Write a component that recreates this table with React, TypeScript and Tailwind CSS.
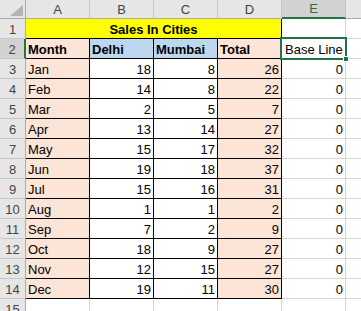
import React from "react";

const data: [string, number, number, number][] = [
  ["Jan", 18, 8, 26],
  ["Feb", 14, 8, 22],
  ["Mar", 2, 5, 7],
  ["Apr", 13, 14, 27],
  ["May", 15, 17, 32],
  ["Jun", 19, 18, 37],
  ["Jul", 15, 16, 31],
  ["Aug", 1, 1, 2],
  ["Sep", 7, 2, 9],
  ["Oct", 18, 9, 27],
  ["Nov", 12, 15, 27],
  ["Dec", 19, 11, 30],
];

function RowHead({ n, selected }: { n: number; selected?: boolean }) {
  return (
    <div
      className={
        "box-border h-[20px] w-[26px] shrink-0 border-b border-b-[#C6C6C6] flex items-end justify-center pb-[1px] leading-[15px] text-[#444444] " +
        (selected
          ? "bg-[#D2D2D2] border-r-2 border-r-[#217346]"
          : "bg-[#E6E6E6] border-r border-r-[#ABABAB]")
      }
    >
      {n}
    </div>
  );
}

export default function App() {
  const cols = ["A", "B", "C", "D", "E"];
  return (
    <div className="relative w-[361px] h-[311px] overflow-hidden bg-white font-['Liberation_Sans',Arial,sans-serif] text-[13px] text-black">
      {/* column header row */}
      <div className="flex h-[19px]">
        <div className="relative box-border w-[26px] h-[19px] shrink-0 bg-[#E6E6E6] border-r border-b border-[#ABABAB]">
          <svg className="absolute left-[10px] top-[5px]" width="13" height="11" viewBox="0 0 13 11">
            <polygon points="13,0 13,11 0,11" fill="#B4B4B4" />
          </svg>
        </div>
        {cols.map((c) => (
          <div
            key={c}
            className={
              "box-border w-[64px] h-[19px] shrink-0 border-r border-r-[#C6C6C6] flex items-center justify-center leading-[15px] " +
              (c === "E"
                ? "bg-[#D2D2D2] text-[#217346] border-b-2 border-b-[#217346]"
                : "bg-[#E6E6E6] text-[#444444] border-b border-b-[#ABABAB]")
            }
          >
            {c}
          </div>
        ))}
        <div className="box-border flex-1 h-[19px] bg-[#E6E6E6] border-b border-b-[#ABABAB]" />
      </div>

      {/* row 1 */}
      <div className="flex">
        <RowHead n={1} />
        <div className="box-border w-[256px] h-[20px] shrink-0 bg-[#FFFF00] border-r border-b border-black flex items-end justify-center pb-[1px] leading-[15px] font-bold">
          Sales In Cities
        </div>
        <div className="box-border w-[64px] h-[20px] shrink-0 border-r border-b border-[#D4D4D4]" />
        <div className="box-border flex-1 h-[20px] border-b border-[#D4D4D4]" />
      </div>

      {/* row 2 */}
      <div className="flex">
        <RowHead n={2} selected />
        <div className="box-border w-[64px] h-[20px] shrink-0 bg-[#FCE4D6] border-r border-b border-black flex items-end px-[2px] pb-[1px] leading-[15px] font-bold">
          Month
        </div>
        <div className="box-border w-[64px] h-[20px] shrink-0 bg-[#BDD7EE] border-r border-b border-black flex items-end px-[2px] pb-[1px] leading-[15px] font-bold">
          Delhi
        </div>
        <div className="box-border w-[64px] h-[20px] shrink-0 bg-[#BDD7EE] border-r border-b border-black flex items-end px-[2px] pb-[1px] leading-[15px] font-bold">
          Mumbai
        </div>
        <div className="box-border w-[64px] h-[20px] shrink-0 bg-[#FCE4D6] border-r border-b border-black flex items-end px-[2px] pb-[1px] leading-[15px] font-bold">
          Total
        </div>
        <div className="box-border w-[64px] h-[20px] shrink-0 border-r border-b border-[#D4D4D4] flex items-end px-[3px] pb-[1px] leading-[15px] whitespace-nowrap">
          Base Line
        </div>
        <div className="box-border flex-1 h-[20px] border-b border-[#D4D4D4]" />
      </div>

      {data.map(([m, d, mu, t], i) => (
        <div className="flex" key={m}>
          <RowHead n={i + 3} />
          <div className="box-border w-[64px] h-[20px] shrink-0 bg-[#FCE4D6] border-r border-b border-black flex items-end px-[2px] pb-[1px] leading-[15px]">
            {m}
          </div>
          <div className="box-border w-[64px] h-[20px] shrink-0 bg-white border-r border-b border-black flex items-end justify-end px-[2px] pb-[1px] leading-[15px]">
            {d}
          </div>
          <div className="box-border w-[64px] h-[20px] shrink-0 bg-white border-r border-b border-black flex items-end justify-end px-[2px] pb-[1px] leading-[15px]">
            {mu}
          </div>
          <div className="box-border w-[64px] h-[20px] shrink-0 bg-[#FCE4D6] border-r border-b border-black flex items-end justify-end px-[2px] pb-[1px] leading-[15px]">
            {t}
          </div>
          <div className="box-border w-[64px] h-[20px] shrink-0 border-r border-b border-[#D4D4D4] flex items-end justify-end px-[2px] pb-[1px] leading-[15px]">
            0
          </div>
          <div className="box-border flex-1 h-[20px] border-b border-[#D4D4D4]" />
        </div>
      ))}

      {/* row 15 */}
      <div className="flex">
        <RowHead n={15} />
        {[0, 1, 2, 3, 4].map((k) => (
          <div key={k} className="box-border w-[64px] h-[20px] shrink-0 border-r border-b border-[#D4D4D4]" />
        ))}
        <div className="box-border flex-1 h-[20px] border-b border-[#D4D4D4]" />
      </div>

      {/* selection box around E2 */}
      <div className="absolute left-[280px] top-[37px] w-[67px] h-[23px] box-border border-2 border-[#217346] pointer-events-none" />
      <div className="absolute left-[343px] top-[56px] w-[6px] h-[6px] bg-[#217346] border border-white box-border" />
    </div>
  );
}
